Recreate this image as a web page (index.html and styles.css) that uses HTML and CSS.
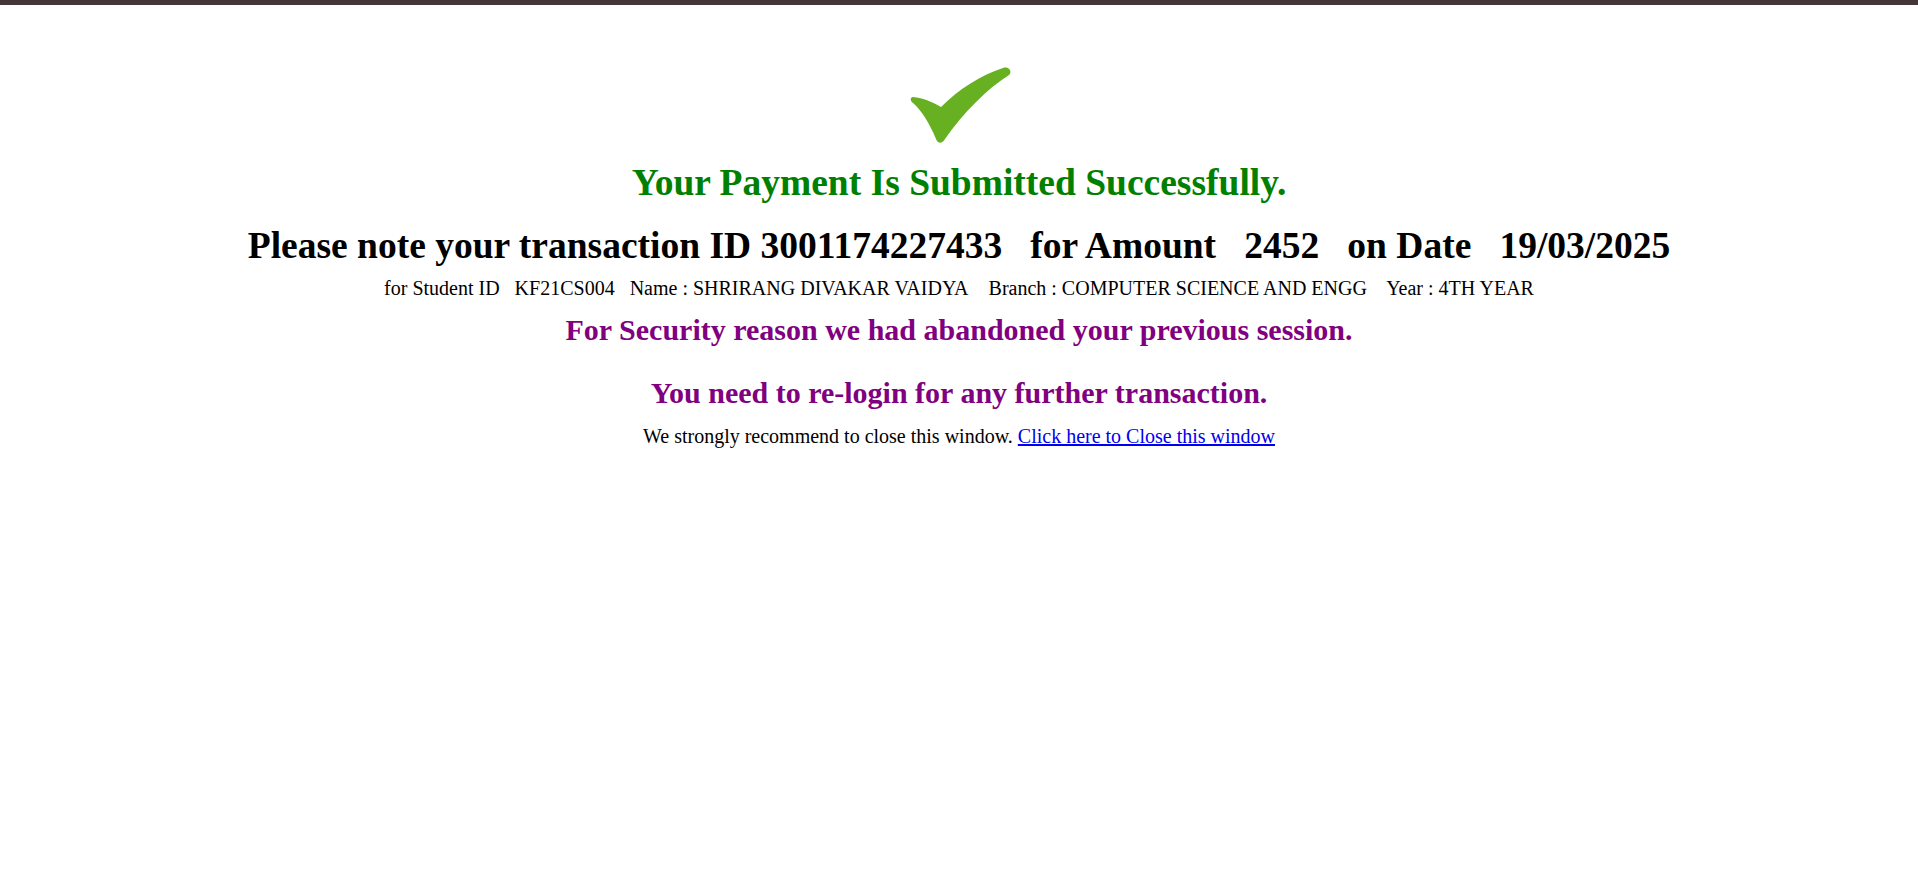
FILE: index.html
```html
<!DOCTYPE html>
<html>
<head>
<meta charset="utf-8">
<title>Payment Submitted</title>
<link rel="stylesheet" href="styles.css">
</head>
<body>
<div class="topbar"></div>
<main class="content">
  <div class="check">
    <svg width="102" height="77" viewBox="0 0 102 77" xmlns="http://www.w3.org/2000/svg">
      <path d="M4 30 C14 31 24 35 32 40 C50 22 72 8 94 1 C99 -1 104 4 100 8 C78 22 55 45 36 72 C33 77 29 77 27 72 C20 55 12 43 4 36 C1 34 1 30 4 30 Z" fill="#66b021"/>
    </svg>
  </div>
  <h1 class="success">Your Payment Is Submitted Successfully.</h1>
  <h1 class="txn">Please note your transaction ID 3001174227433&nbsp;&nbsp; for Amount&nbsp;&nbsp; 2452&nbsp;&nbsp; on Date&nbsp;&nbsp; 19/03/2025</h1>
  <p class="student">for Student ID&nbsp;&nbsp; KF21CS004&nbsp;&nbsp; Name : SHRIRANG DIVAKAR VAIDYA&nbsp;&nbsp;&nbsp; Branch : COMPUTER SCIENCE AND ENGG&nbsp;&nbsp;&nbsp; Year : 4TH YEAR</p>
  <h2 class="notice first">For Security reason we had abandoned your previous session.</h2>
  <h2 class="notice second">You need to re-login for any further transaction.</h2>
  <p class="close">We strongly recommend to close this window. <a href="#" class="close-link">Click here to Close this window</a></p>
</main>
</body>
</html>
```
FILE: styles.css
```css
html, body {
  margin: 0;
  padding: 0;
  background: #ffffff;
}
body {
  font-family: "Liberation Serif", "Times New Roman", serif;
  color: #000000;
}
.topbar {
  height: 5px;
  background: #433538;
}
.content {
  display: flex;
  flex-direction: column;
  align-items: center;
  text-align: center;
}
.check {
  margin-top: 62px;
  height: 77px;
  line-height: 0;
}
.check svg {
  display: block;
  margin-left: 2px;
}
.success {
  margin: 16.5px 0 0;
  font-size: 37.5px;
  line-height: 44px;
  font-weight: bold;
  color: #008000;
}
.txn {
  margin: 19px 0 0;
  font-size: 37.5px;
  line-height: 44px;
  font-weight: bold;
  color: #000000;
}
.student {
  margin: 8px 0 0;
  font-size: 20px;
  line-height: 24px;
}
.notice {
  margin: 0;
  font-size: 30px;
  line-height: 36px;
  font-weight: bold;
  color: #800080;
}
.notice.first {
  margin-top: 12.5px;
}
.notice.second {
  margin-top: 27px;
}
.close {
  margin: 12.5px 0 0;
  font-size: 20px;
  line-height: 24px;
}
.close-link {
  color: #0000ee;
  text-decoration: underline;
}
```
